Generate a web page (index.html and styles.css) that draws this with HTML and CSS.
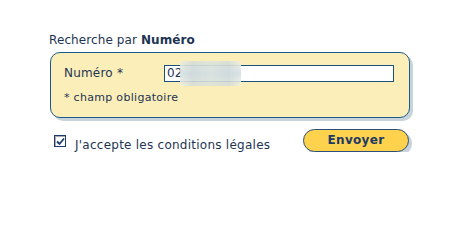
FILE: index.html
```html
<!DOCTYPE html>
<html lang="fr">
<head>
<meta charset="utf-8">
<link rel="stylesheet" href="styles.css">
</head>
<body>
<div class="page">
  <div class="title">Recherche par <b>Numéro</b></div>
  <div class="box">
    <div class="row">
      <label class="label">Numéro *</label>
      <div class="field">
        <span class="value">02</span>
        <span class="blur"></span>
      </div>
    </div>
    <div class="note">* champ obligatoire</div>
  </div>
  <div class="bottom">
    <label class="accept"><span class="check"><svg width="9" height="9" viewBox="0 0 9 9"><path d="M1 4.5 L3.5 7 L8 1.5" fill="none" stroke="#1c3c6c" stroke-width="1.8"/></svg></span><span class="accept-text">J'accepte les conditions légales</span></label>
    <button class="send">Envoyer</button>
  </div>
</div>
</body>
</html>
```
FILE: styles.css
```css
html, body { margin: 0; padding: 0; background: #fff; }
body { font-family: Verdana, "DejaVu Sans", sans-serif; color: #1d3553; }
.page { padding: 33px 0 0 49px; width: 365px; }
.title { font-size: 12px; line-height: 15px; height: 19px; letter-spacing: 0.1px; }
.title b { font-weight: bold; }
.box {
  margin-left: 1px;
  border: 1px solid #1b5a88;
  border-radius: 10px;
  background: #fbeeb9;
  box-shadow: 3px 3px 0 #c8d4dc;
  padding: 11px 0 0 13px;
  box-sizing: content-box;
  width: 345px; height: 53px;
}
.row { display: flex; align-items: center; height: 18px; }
.label { font-size: 12px; width: 100px; letter-spacing: 0.2px; }
.field {
  position: relative;
  width: 226px; height: 15px;
  border: 1px solid #1b4f7e;
  background: #fff;
  font-size: 12px; line-height: 15px;
  padding-left: 2px;
}
.blur {
  position: absolute; left: 15px; top: -5px; width: 61px; height: 25px;
  background:
    linear-gradient(90deg, rgba(255,255,255,0) 0, rgba(190,205,210,.5) 20%, rgba(210,220,215,.6) 50%, rgba(190,205,210,.5) 80%, rgba(255,255,255,0) 100%),
    linear-gradient(180deg, #f3f1dc 0, #e1e8e4 30%, #d6e0e2 50%, #e1e8e4 70%, #f3f1dc 100%);
  opacity: .9;
}
.note { font-size: 11px; margin-top: 10px; line-height: 12px; letter-spacing: 0.3px; }
.bottom { display: flex; justify-content: space-between; align-items: flex-start; margin-top: 11px; padding-left: 5px; width: 355px; }
.accept { display: flex; align-items: flex-start; font-size: 12px; margin-top: 6px; letter-spacing: 0.25px; }
.accept-text { margin-top: 3px; line-height: 14px; }
.check {
  width: 10px; height: 10px; border: 1px solid #1c3c6c; background: #fff;
  display: inline-flex; align-items: center; justify-content: center;
  margin-right: 9px; box-shadow: inset 1px 1px 0 #aaa;
}
.send {
  font-family: Verdana, "DejaVu Sans", sans-serif;
  font-weight: bold; font-size: 12px; color: #1d3a64;
  width: 106px; height: 23px;
  border: 1px solid #2b4e78; border-radius: 12px;
  background: #ffd24d;
  box-shadow: 3px 3px 0 #c8d4dc;
  padding: 0; line-height: 19px; letter-spacing: 0.3px;
}
```
